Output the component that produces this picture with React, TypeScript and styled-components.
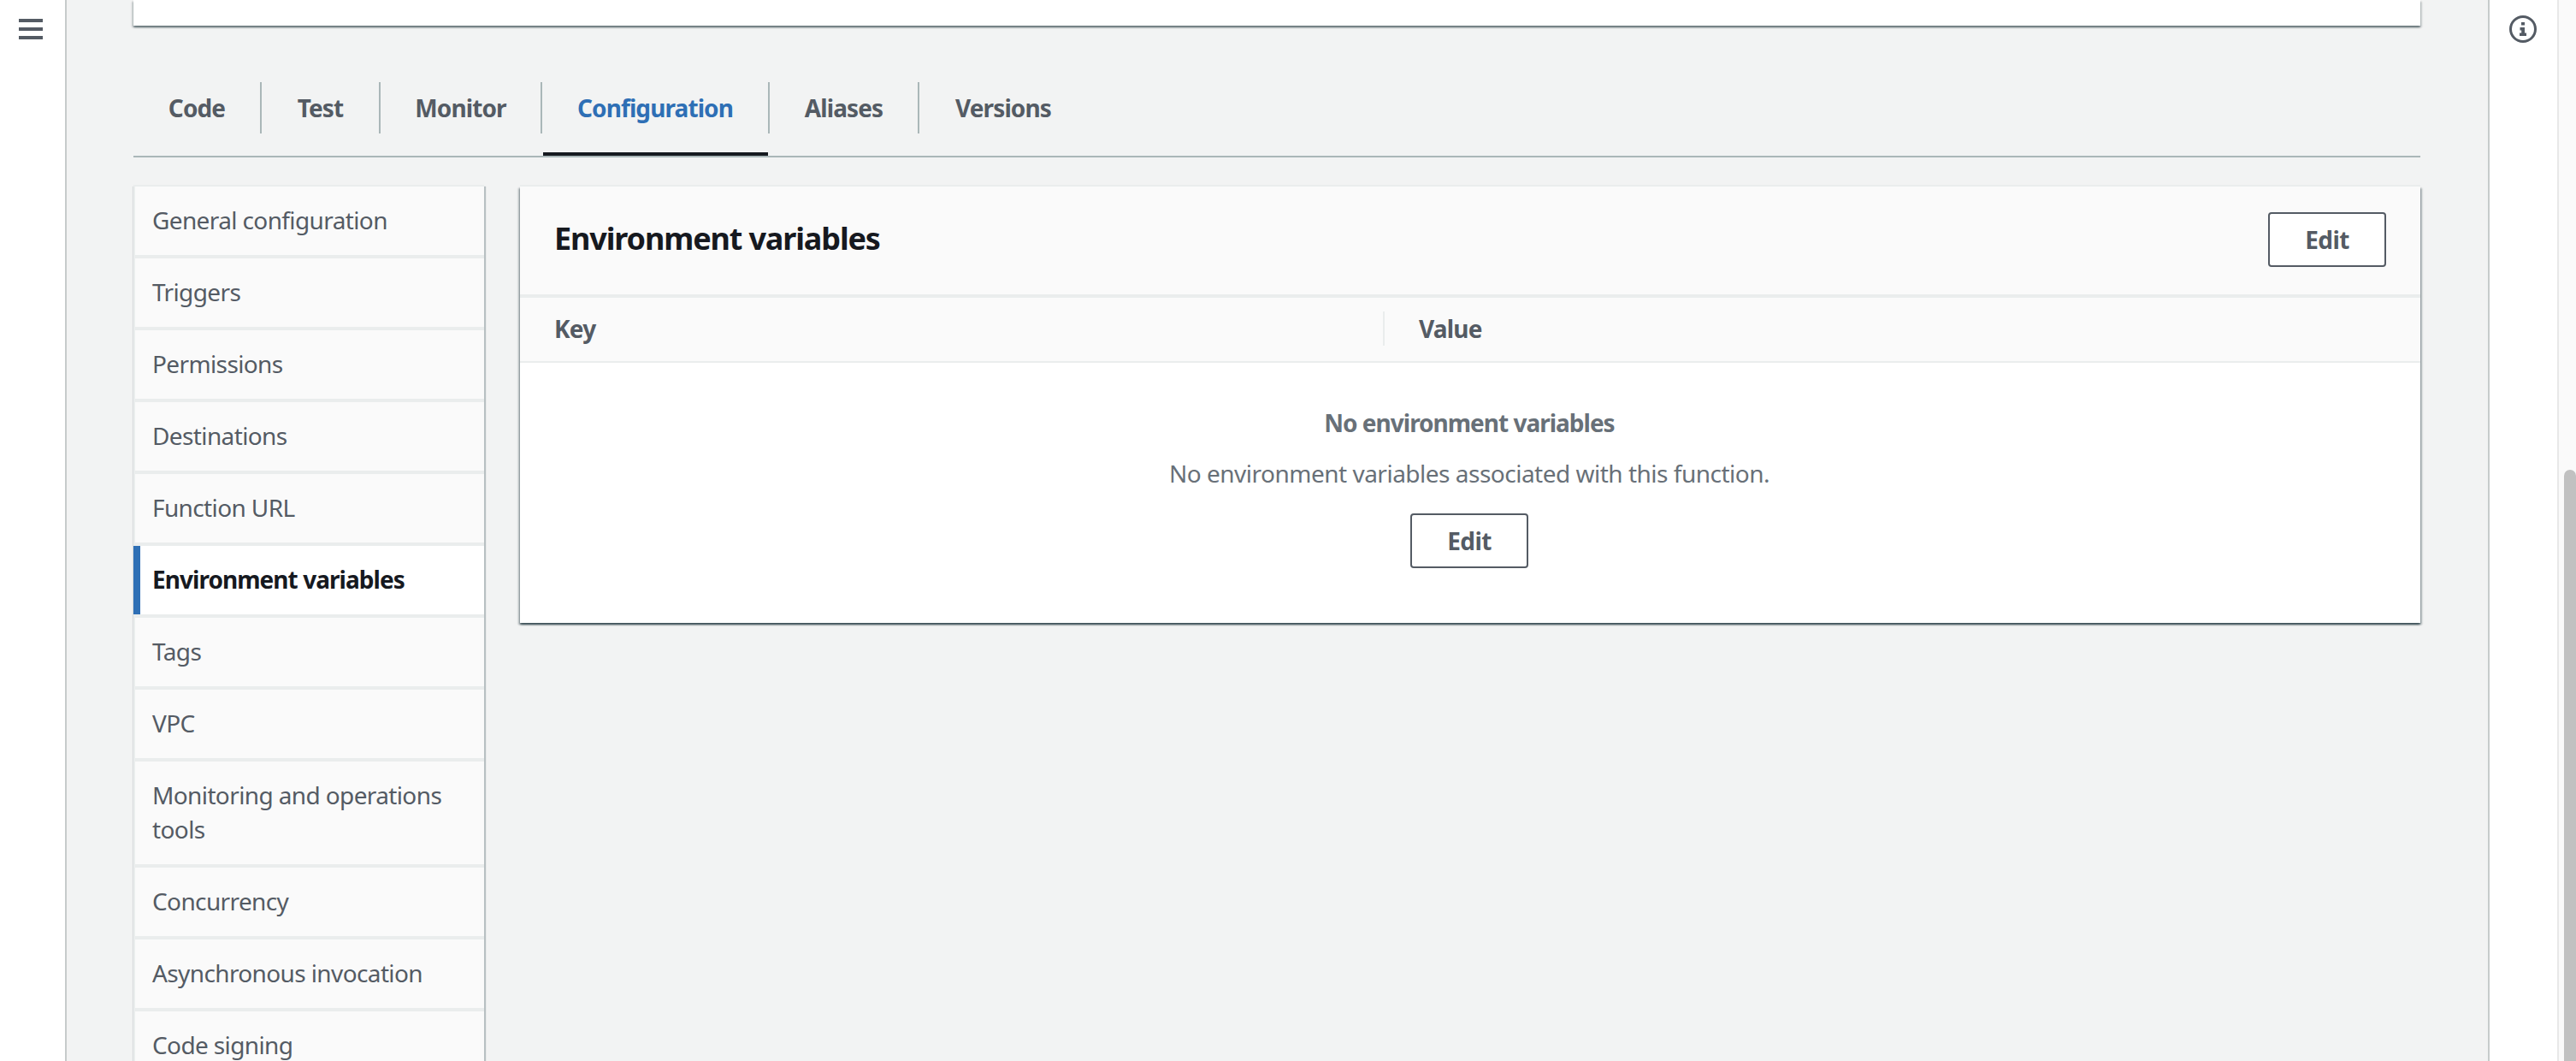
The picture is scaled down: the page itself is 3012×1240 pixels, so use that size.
import React from "react";
import styled, { createGlobalStyle } from "styled-components";

const Global = createGlobalStyle`
  html, body { margin: 0; padding: 0; height: 1240px; overflow: hidden; background: #f2f3f3; }
  * { box-sizing: border-box; }
  body { font-family: "Noto Sans", "Open Sans", Arial, sans-serif; color: #545b64; }
`;

const Page = styled.div`
  display: grid;
  grid-template-columns: 78px 1fr 81px 22px;
  width: 3012px;
  height: 1240px;
  overflow: hidden;
`;

const Rail = styled.div<{ $side: "left" | "right" }>`
  background: #fff;
  ${(p) =>
    p.$side === "left"
      ? "border-right: 2px solid #c6cbcb; padding-right: 4px;"
      : "border-left: 2px solid #c6cbcb; padding-right: 1px;"}
  display: flex;
  justify-content: center;
  padding-top: 18px;
`;

const Scrollbar = styled.div`
  background: #fafafa;
  border-left: 2px solid #e8e8e8;
  padding-top: 549px;
  padding-left: 6px;
`;

const Thumb = styled.div`
  height: 100%;
  background: #c1c1c1;
  border-radius: 7px 7px 0 0;
`;

const Main = styled.main`
  padding: 0 79px 0 78px;
  min-width: 0;
`;

const TopCard = styled.div`
  height: 30px;
  background: #fff;
  box-shadow: 0 2px 2px 0 rgba(0, 28, 36, 0.5), 2px 2px 2px 0 rgba(0, 28, 36, 0.12), -2px 2px 2px 0 rgba(0, 28, 36, 0.12);
`;

const TabList = styled.div`
  display: flex;
  margin-top: 44px;
  border-bottom: 2px solid #aab7b8;
`;

const Tab = styled.div<{ $active?: boolean; $w: number }>`
  position: relative;
  width: ${(p) => p.$w}px;
  padding: 22px 0 26px;
  font-size: 28px;
  font-weight: 700;
  color: ${(p) => (p.$active ? "#2e6fb5" : "#545b64")};
  ${(p) =>
    p.$active &&
    `&::after { content: ""; position: absolute; left: 1px; right: 2px; bottom: 0; height: 4px; background: #16191f; }`}
`;

const TabLabel = styled.div<{ $last?: boolean }>`
  display: flex;
  align-items: center;
  justify-content: center;
  height: 60px;
  letter-spacing: -0.9px;
  ${(p) => !p.$last && "border-right: 2px solid #aab7b8;"}
`;

const Columns = styled.div`
  display: grid;
  grid-template-columns: 410px 1fr;
  gap: 42px;
  margin-top: 34px;
  align-items: start;
`;

const Nav = styled.nav`
  display: flex;
  flex-direction: column;
  gap: 4px;
  background: #eaeded;
  box-shadow: 0 -2px 0 0 #eaeded, 2px 0 1px 0 rgba(0, 28, 36, 0.24), -1px 0 1px 0 rgba(0, 28, 36, 0.1);
`;

const NavItem = styled.div<{ $active?: boolean }>`
  min-height: 80px;
  padding: 19px 20px 21px ${(p) => (p.$active ? "14px" : "20px")};
  font-size: 28px;
  line-height: 40px;
  letter-spacing: ${(p) => (p.$active ? "-0.95px" : "-0.62px")};
  background: ${(p) => (p.$active ? "#fff" : "#fafafa")};
  color: ${(p) => (p.$active ? "#16191f" : "#545b64")};
  font-weight: ${(p) => (p.$active ? 700 : 400)};
  border-left: ${(p) => (p.$active ? "8px solid #2e6fb5" : "2px solid #eaeded")};
`;

const Panel = styled.section`
  background: #fff;
  box-shadow: 0 -2px 0 0 #eaeded, 0 2px 2px 0 rgba(0, 28, 36, 0.6), 2px 2px 2px 0 rgba(0, 28, 36, 0.25), -2px 2px 2px 0 rgba(0, 28, 36, 0.25);
`;

const PanelHeader = styled.header`
  display: flex;
  align-items: center;
  justify-content: space-between;
  height: 130px;
  padding: 0 40px 2px;
  background: #fafafa;
  border-bottom: 4px solid #eaeded;
`;

const Title = styled.h2`
  margin: 0 0 4px;
  font-size: 36px;
  font-weight: 700;
  letter-spacing: -1.14px;
  color: #16191f;
`;

const EditButton = styled.button`
  width: 138px;
  height: 64px;
  background: #fff;
  border: 2px solid #545b64;
  border-radius: 4px;
  color: #545b64;
  font-family: inherit;
  font-size: 28px;
  font-weight: 700;
  padding: 0;
  letter-spacing: -0.6px;
`;

const ColumnHead = styled.div`
  display: grid;
  grid-template-columns: 1009px 1fr;
  height: 76px;
  padding-bottom: 2px;
  align-items: center;
  background: #fafafa;
  border-bottom: 2px solid #eaeded;
  font-size: 28px;
  font-weight: 700;
  line-height: 40px;
  letter-spacing: -0.8px;
`;

const HeadCell = styled.div<{ $divider?: boolean }>`
  padding-left: 40px;
  ${(p) => p.$divider && "border-left: 2px solid #eaeded;"}
`;

const Empty = styled.div`
  display: flex;
  flex-direction: column;
  align-items: center;
  height: 304px;
  padding: 50px 2px 0 0;
  color: #687078;
  font-size: 28px;
`;

const EmptyTitle = styled.div`
  font-weight: 700;
  line-height: 40px;
  letter-spacing: -1px;
`;

const EmptyText = styled.div`
  margin: 19px 0 27px;
  line-height: 40px;
  letter-spacing: -0.5px;
`;

const Hamburger = () => (
  <svg width="28" height="24" viewBox="0 0 28 24" style={{ marginTop: 4 }}>
    <path d="M0 2h28M0 12h28M0 22h28" stroke="#545b64" strokeWidth="4" />
  </svg>
);

const InfoIcon = () => (
  <svg width="32" height="32" viewBox="0 0 32 32">
    <circle cx="16" cy="16" r="14.5" fill="none" stroke="#545b64" strokeWidth="3" />
    <path d="M14 8h4v3.5h-4zM12.5 14h5.5v6.5h2V24h-8v-3.5h2.2v-3h-1.7z" fill="#545b64" />
  </svg>
);

const tabs = [
  { label: "Code", w: 150 },
  { label: "Test", w: 139 },
  { label: "Monitor", w: 189 },
  { label: "Configuration", w: 266, active: true },
  { label: "Aliases", w: 175 },
  { label: "Versions", w: 196, last: true },
];

const nav = [
  "General configuration",
  "Triggers",
  "Permissions",
  "Destinations",
  "Function URL",
  "Environment variables",
  "Tags",
  "VPC",
  "Monitoring and operations tools",
  "Concurrency",
  "Asynchronous invocation",
  "Code signing",
];

export default function App() {
  return (
    <Page>
      <Global />
      <Rail $side="left">
        <Hamburger />
      </Rail>
      <Main>
        <TopCard />
        <TabList>
          {tabs.map((t) => (
            <Tab key={t.label} $w={t.w} $active={t.active}>
              <TabLabel $last={t.last}>{t.label}</TabLabel>
            </Tab>
          ))}
        </TabList>
        <Columns>
          <Nav>
            {nav.map((n) => (
              <NavItem key={n} $active={n === "Environment variables"}>
                {n}
              </NavItem>
            ))}
          </Nav>
          <Panel>
            <PanelHeader>
              <Title>Environment variables</Title>
              <EditButton>Edit</EditButton>
            </PanelHeader>
            <ColumnHead>
              <HeadCell>Key</HeadCell>
              <HeadCell $divider>Value</HeadCell>
            </ColumnHead>
            <Empty>
              <EmptyTitle>No environment variables</EmptyTitle>
              <EmptyText>No environment variables associated with this function.</EmptyText>
              <EditButton>Edit</EditButton>
            </Empty>
          </Panel>
        </Columns>
      </Main>
      <Rail $side="right">
        <InfoIcon />
      </Rail>
      <Scrollbar>
        <Thumb />
      </Scrollbar>
    </Page>
  );
}
